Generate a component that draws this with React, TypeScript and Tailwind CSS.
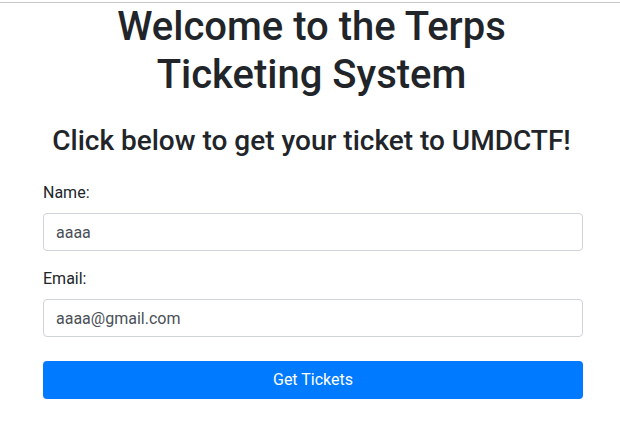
export default function App() {
  return (
    <div
      className="min-h-[431px] bg-white text-[#212529]"
      style={{ fontFamily: "Roboto, 'Liberation Sans', sans-serif" }}
    >
      <div className="mt-[2px] border-t border-[#c8c8c8]" />
      <div className="mx-auto w-[540px] pl-[3px]">
        <h1 className="text-center text-[40px] font-medium leading-[48px]">
          Welcome to the Terps
          <br />
          Ticketing System
        </h1>
        <h3 className="mt-[25px] text-center text-[28px] font-medium leading-[34px]">
          Click below to get your ticket to UMDCTF!
        </h3>
        <form className="mt-[23px]" onSubmit={(e) => e.preventDefault()}>
          <div className="mb-4">
            <label className="mb-2 block text-base leading-6">Name:</label>
            <input
              className="block h-[38px] w-[540px] rounded border border-[#ced4da] px-3 text-base text-[#495057] outline-none"
              defaultValue="aaaa"
            />
          </div>
          <div className="mb-6">
            <label className="mb-2 block text-base leading-6">Email:</label>
            <input
              className="block h-[38px] w-[540px] rounded border border-[#ced4da] px-3 text-base text-[#495057] outline-none"
              defaultValue="aaaa@gmail.com"
            />
          </div>
          <button
            type="submit"
            className="block h-[38px] w-[540px] rounded bg-[#007bff] text-base text-white"
          >
            Get Tickets
          </button>
        </form>
      </div>
    </div>
  );
}
